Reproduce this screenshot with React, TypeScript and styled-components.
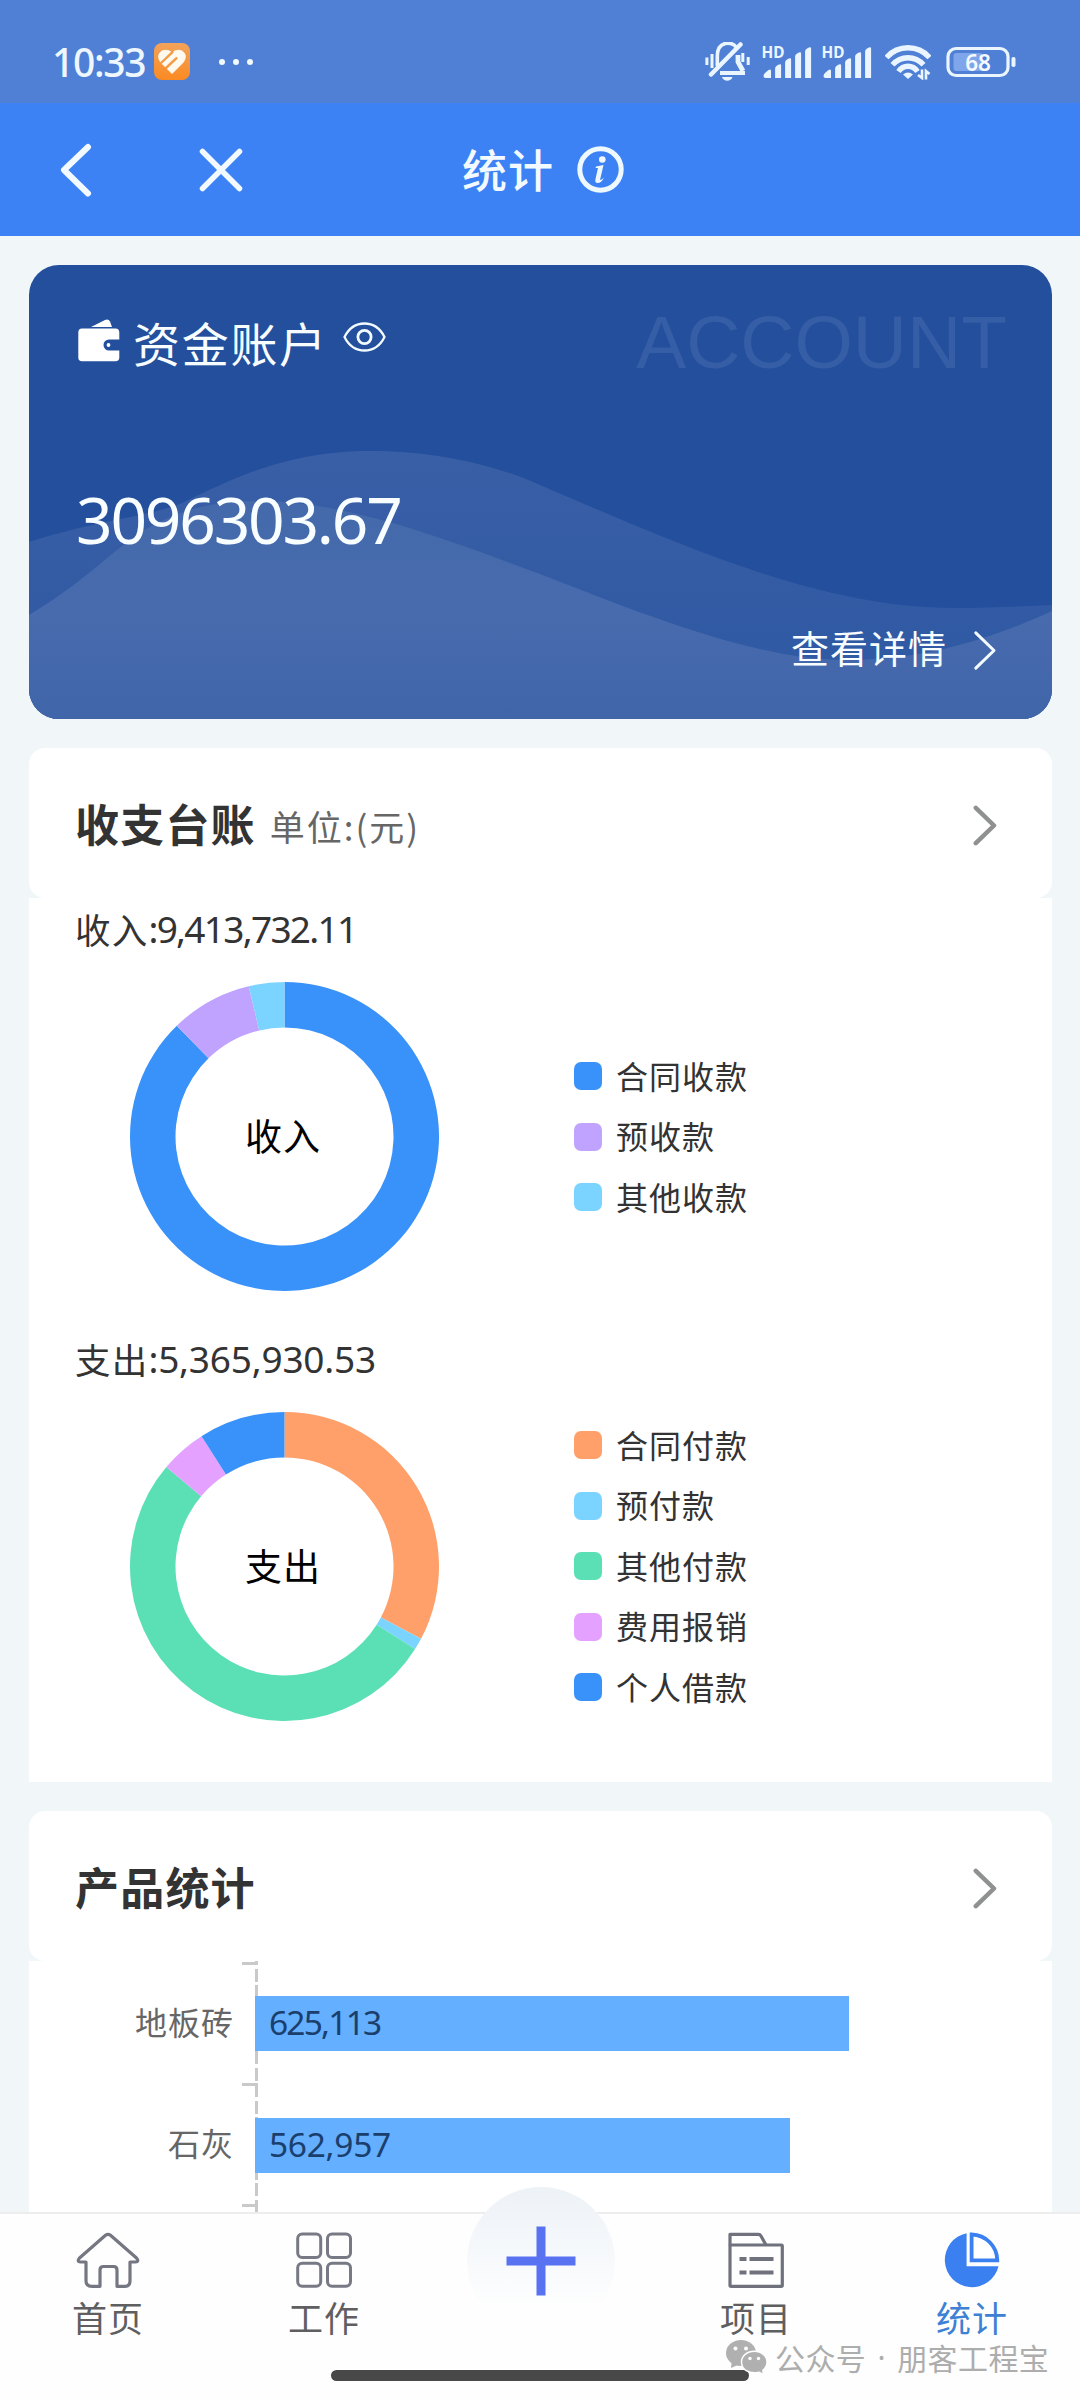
import React from "react";
import styled, { createGlobalStyle } from "styled-components";

const CJK = '"Noto Sans CJK SC", sans-serif';
const MIXED = '"Noto Sans", "Noto Sans CJK SC", sans-serif';

const GlobalStyle = createGlobalStyle`
  * { box-sizing: border-box; }
  body { margin: 0; background: #f1f6f9; }
  svg { display: block; flex: none; }
`;

const Screen = styled.div`
  position: relative;
  width: 1080px;
  height: 2400px;
  overflow: hidden;
  display: flex;
  flex-direction: column;
  background: #f1f6f9;
  font-family: ${CJK};
  color: #333;
`;

/* ---------- status bar ---------- */

const StatusBar = styled.header`
  flex: none;
  display: flex;
  align-items: center;
  height: 103px;
  padding: 20px 64px 0 52px;
  background: #4f80d6;
  color: #eef7ff;
`;

const Clock = styled.span`
  font: 500 39px/40px ${MIXED};
  letter-spacing: -1.3px;
  width: 102px;
`;

const Dots = styled.div`
  display: flex;
  gap: 8px;
  margin-left: 29px;
`;

const Dot = styled.i`
  width: 6px;
  height: 6px;
  border-radius: 50%;
  background: #f2f9ff;
`;

const StatusIcons = styled.div`
  display: flex;
  align-items: center;
  margin-left: auto;
`;

const Spacer = styled.i<{ $w: number }>`
  flex: none;
  width: ${(p) => p.$w}px;
`;

/* ---------- navigation bar ---------- */

const NavBar = styled.nav`
  flex: none;
  display: flex;
  align-items: center;
  height: 133px;
  padding-left: 60px;
  background: #3c82f4;
  color: #f3faff;
`;

const NavTitle = styled.h1`
  margin: -2px 0 0 218px;
  font: 500 45px/60px ${CJK};
  letter-spacing: 1px;
  width: 115px;
`;

/* ---------- content ---------- */

const Content = styled.main`
  flex: 1;
  min-height: 0;
  overflow: hidden;
  display: flex;
  flex-direction: column;
  gap: 29px;
  padding: 29px 28px 0 29px;
`;

const AccountCard = styled.section`
  position: relative;
  flex: none;
  height: 454px;
  padding: 32px 45px 0 47px;
  border-radius: 30px;
  overflow: hidden;
  background: #234f9c;
  color: #f8fdff;
`;

const Waves = styled.svg`
  position: absolute;
  inset: 0;
`;

const AccountHead = styled.div`
  position: relative;
  display: flex;
  align-items: center;
  height: 90px;
  padding-left: 2px;
`;

const AccountTitle = styled.h2`
  margin: 0 0 0 13px;
  font: 400 47px/60px ${CJK};
  letter-spacing: 1.7px;
  width: 210px;
`;

const AccountMark = styled.span`
  margin-left: auto;
  font: 400 75px/90px "Liberation Sans", sans-serif;
  color: #365ea7;
`;

const IconShift = styled.span<{ $up: number }>`
  padding-bottom: ${(p) => p.$up * 2}px;
`;

const Balance = styled.div`
  position: relative;
  margin-top: 93px;
  font: 400 64px/80px ${MIXED};
  letter-spacing: -2.2px;
`;

const DetailLink = styled.div`
  position: relative;
  display: flex;
  align-items: center;
  justify-content: flex-end;
  height: 60px;
  margin-top: 57px;
  padding-right: 10px;
  font: 400 38px/60px ${CJK};
  letter-spacing: 1px;
`;

const DetailArrow = styled.span`
  padding: 7px 0 0 26px;
`;

const Section = styled.section`
  flex: none;
`;

const SectionHead = styled.div`
  display: flex;
  align-items: center;
  height: 150px;
  padding: 0 55px 0 46px;
  border-radius: 16px;
  background: #fff;
`;

const SectionTitle = styled.h2`
  margin: 0;
  font: 700 44px/60px ${CJK};
  letter-spacing: 1.2px;
  color: #333;
`;

const SectionUnit = styled.span`
  margin-left: 14px;
  padding-top: 5px;
  font: 400 35px/60px ${CJK};
  letter-spacing: 2px;
  color: #666;
`;

const HeadArrow = styled.span`
  margin-left: auto;
  padding-top: 5px;
`;

const LedgerBody = styled.div`
  display: flex;
  flex-direction: column;
  gap: 42.5px;
  height: 884px;
  padding: 6px 46px 0;
  background: #fff;
`;

const LedgerTotal = styled.div`
  font: 400 35.5px/50px ${CJK};
  letter-spacing: 1.2px;
  display: flex;
  color: #333;
`;

const Figures = styled.span<{ $track: number }>`
  font: 400 37px/50px ${MIXED};
  letter-spacing: ${(p) => p.$track}px;
`;

const ChartRow = styled.div`
  display: flex;
  align-items: center;
  height: 309px;
  margin-top: 28px;
  padding-left: 55px;
`;

const DonutBox = styled.div`
  display: grid;
  place-items: center;
  width: 309px;
  height: 309px;
  > * { grid-area: 1 / 1; }
`;

const DonutLabel = styled.span`
  padding: 0 3px 3px 0;
  font: 400 37px/50px ${CJK};
  letter-spacing: 1px;
  color: #000;
`;

const Legend = styled.ul`
  margin: 0 0 0 135px;
  padding: 0;
  list-style: none;
`;

const LegendItem = styled.li`
  display: flex;
  align-items: center;
  gap: 14px;
  height: 60.5px;
  font: 400 32px/44px ${CJK};
  letter-spacing: 1px;
  span { margin-top: -3px; }
`;

const Swatch = styled.i<{ $color: string }>`
  width: 28px;
  height: 28px;
  border-radius: 7px;
  background: ${(p) => p.$color};
`;

/* ---------- bar chart ---------- */

const BarBody = styled.div`
  display: grid;
  grid-template-columns: 205px 21px 1fr;
  height: 300px;
  background: #fff;
`;

const Names = styled.div`
  padding-top: 1px;
`;

const Name = styled.div`
  height: 121.2px;
  text-align: right;
  font: 400 32px/119px ${CJK};
  letter-spacing: 1px;
  color: #666;
`;

const Axis = styled.div`
  display: flex;
  flex-direction: column;
  align-items: flex-end;
  width: 24px;
  padding: 1px 0 0;
  background: repeating-linear-gradient(
      to bottom, #c9c9c9 0 13px, transparent 13px 16.5px
    ) right -8.5px / 3px 320px no-repeat;
`;

const Tick = styled.i`
  width: 16px;
  height: 121px;
  border-top: 3px solid #c9c9c9;
`;

const Bars = styled.div`
  position: relative;
  display: flex;
  flex-direction: column;
  gap: 66.5px;
  padding-top: 35px;
`;

const Bar = styled.div<{ $track: number }>`
  height: 55px;
  padding-left: 14px;
  background: #64afff;
  font: 400 33.5px/53px ${MIXED};
  letter-spacing: ${(p) => p.$track}px;
  color: #1b3f6d;
`;

/* ---------- tab bar ---------- */

const TabBar = styled.footer`
  position: relative;
  flex: none;
  display: grid;
  grid-template-columns: repeat(5, 216px);
  height: 188px;
  border-top: 2px solid #ededee;
  background: #fefefe;
`;

const Tab = styled.div<{ $active?: boolean }>`
  display: flex;
  flex-direction: column;
  align-items: center;
  padding-top: 18px;
  font: 400 35px/36px ${CJK};
  letter-spacing: 1px;
  color: ${(p) => (p.$active ? "#3d80d4" : "#5f5f61")};
  svg { margin-bottom: 11px; }
`;

const AddButton = styled.div`
  position: absolute;
  left: 467px;
  top: -27px;
  display: grid;
  place-items: center;
  width: 148px;
  height: 148px;
  border-radius: 50%;
  background: linear-gradient(#edf2f6, #f5f8fb 40%, #fefefe 82%);
`;

const HomeIndicator = styled.div`
  position: absolute;
  left: 331px;
  bottom: 19px;
  width: 418px;
  height: 11px;
  border-radius: 6px;
  background: #484848;
`;

const Watermark = styled.div`
  position: absolute;
  left: 726px;
  bottom: 25px;
  display: flex;
  align-items: center;
  height: 35px;
  font: 400 30px/32px ${CJK};
  letter-spacing: 0.4px;
  color: #adadad;
  svg { margin-right: 8px; }
  span { margin-top: -2px; }
`;

const Separator = styled.b`
  width: 31px;
  text-align: center;
  font: 400 30px/32px "Noto Sans", sans-serif;
`;

/* ---------- drawings ---------- */

const HeartAppIcon = () => (
  <svg width="36" height="37" viewBox="0 0 36 37">
    <defs>
      <linearGradient id="app" x1="0" y1="0" x2="0" y2="1">
        <stop offset="0" stopColor="#f2a35c" />
        <stop offset="1" stopColor="#fb8a22" />
      </linearGradient>
    </defs>
    <rect width="36" height="37" rx="8" fill="url(#app)" />
    <path d="M18 30.500 L7 19.500 C2.500 14 5 7.300 11.500 7.300 C14.500 7.300 16.800 8.600 18 10 C19.500 8.600 21.500 7.300 24.500 7.300 C31 7.300 33.500 14 29 19.500 Z" fill="#fffaf0" stroke="#fffaf0" strokeLinejoin="round" />
    <path d="M6.500 20.500 L18.500 9.200 M12 25 L22.500 15.200" stroke="#f59a45" strokeWidth="2.400" strokeLinecap="round" />
  </svg>
);

const MuteBell = () => (
  <svg width="45" height="40" viewBox="705.500 42 45 40" fill="none" stroke="#eaf5ff" strokeWidth="3.600">
    <path d="M717.800 66 V56 C717.800 40.500 733 41 736.500 47" />
    <path d="M711.500 74.500 L741 44.500" strokeWidth="4.500" strokeLinecap="round" />
    <path d="M738.500 55 V62 L743.500 71" strokeWidth="4.800" />
    <path d="M720.500 73 H745.500" strokeWidth="4" />
    <path d="M722.500 77 H733 C731.500 82 724 82 722.500 77 Z" fill="#eaf5ff" stroke="none" />
    <path d="M707.400 57.500 V65 M712.500 54 V68 M743.300 53 V62 M748.700 57 V65" strokeWidth="3" />
  </svg>
);

const Signal = () => (
  <svg width="51" height="50" viewBox="761.500 36 51 50" fill="#eaf5ff">
    <text x="762" y="57" fontFamily="Noto Sans, sans-serif" fontSize="16.500" fontWeight="700" textLength="23" lengthAdjust="spacingAndGlyphs">HD</text>
    <path d="M764 75 q0 -2 2 -3.500 l3 -2.500 q2.500 -1.500 2.500 1 V77 H766 q-2 0 -2 -2 Z" />
    <path d="M775.600 67.500 q0 -2 2 -3 q4 -2.500 4 0 V77 H775.600 Z" />
    <path d="M785.600 61.500 q0 -2 2 -3 q4 -2.500 4 0 V77 H785.600 Z" />
    <path d="M795.600 55.500 q0 -2 2 -3 q4 -2.500 4 0 V77 H795.600 Z" />
    <path d="M805.600 50.500 q0 -2 2 -3 q4 -2.500 4 0 V77 H805.600 Z" />
  </svg>
);

const Wifi = () => (
  <svg width="46" height="36" viewBox="885 44 46 36" fill="none" stroke="#eaf5ff" strokeWidth="5.400">
    <path d="M886.500 57.500 C898 44.500 918 44.500 929.500 57.500" />
    <path d="M892.500 64.800 C901 55.300 915 55.300 923.500 64.800" />
    <path d="M898.500 71.500 C903.500 64.500 912.500 64.500 917.500 71.500" />
    <path d="M903 74.500 Q908 70.500 913 74.500 L908 79 Z" fill="#eaf5ff" stroke="none" />
    <path d="M922 69.500 V78 L918 75 M926 79.500 V71 L929.500 74" strokeWidth="2.600" />
  </svg>
);

const Battery = () => (
  <svg width="70" height="32" viewBox="945.500 45 70 32">
    <rect x="953" y="52" width="29" height="18" rx="3" fill="#7fa6ea" />
    <rect x="947.500" y="47.500" width="60" height="27" rx="8" fill="none" stroke="#eaf5ff" strokeWidth="3.200" />
    <rect x="1011" y="56" width="4" height="10" rx="1.800" fill="#eaf5ff" />
    <text x="977.500" y="69.700" textAnchor="middle" fontFamily="Noto Sans, sans-serif" fontSize="22.500" fontWeight="600" fill="#f4faff">68</text>
  </svg>
);

const InfoIcon = () => (
  <svg width="47" height="47" viewBox="0 0 47 47">
    <circle cx="23.500" cy="23.500" r="20.700" fill="none" stroke="#eef8ff" strokeWidth="5" />
    <circle cx="25.300" cy="13.500" r="3.300" fill="#eef8ff" />
    <path d="M19 20.500 L26.500 19 L23 34 Q24.500 34 27 31.500 Q24.500 37 20.500 37 Q17.500 37 18.500 33 L21 22 L18.500 22 Z" fill="#eef8ff" />
  </svg>
);

const Wallet = () => (
  <svg width="42" height="43" viewBox="0 0 42 43" fill="#fff">
    <path d="M13 8 L27 0.900 Q30.500 -0.400 32 2.500 L34 8 Z" />
    <path d="M4 9.500 H37.500 Q41.300 9.500 41.300 13.500 V20.500 H31 A5 5 0 0 0 31 31.500 H41.300 V38.500 Q41.300 42.300 37.500 42.300 H4 Q0.300 42.300 0.300 38.500 V13.500 Q0.300 9.500 4 9.500 Z" />
    <circle cx="30.500" cy="26" r="1.900" />
  </svg>
);

const Eye = () => (
  <svg width="43" height="30" viewBox="0 0 43 30" fill="none" stroke="#f3fbff" strokeWidth="2.300">
    <path d="M1.500 15 C6 6 13.500 1.500 21.500 1.500 S37 6 41.500 15 C37 24 29.500 28.500 21.500 28.500 S6 24 1.500 15 Z" />
    <circle cx="21.500" cy="15" r="6.600" strokeWidth="2.800" />
  </svg>
);

const Chevron = ({ color, stroke }: { color: string; stroke: number }) => (
  <svg width="24" height="41" viewBox="0 0 24 41" fill="none" stroke={color} strokeWidth={stroke} strokeLinecap="round" strokeLinejoin="round">
    <path d="M2.800 2.800 L21 20.500 L2.800 38.200" />
  </svg>
);

type Slice = { name: string; color: string; deg: number };

const R = 154.5;
const INNER = 109;

function Donut({ slices }: { slices: Slice[] }) {
  let angle = 0;
  const point = (r: number, deg: number) => {
    const a = ((deg - 90) * Math.PI) / 180;
    return `${R + r * Math.cos(a)} ${R + r * Math.sin(a)}`;
  };
  return (
    <svg width="309" height="309" viewBox="0 0 309 309">
      {slices.map((s) => {
        const from = angle;
        const to = (angle += s.deg);
        const large = s.deg > 180 ? 1 : 0;
        return (
          <path
            key={s.name}
            fill={s.color}
            d={`M${point(R, from)} A${R} ${R} 0 ${large} 1 ${point(R, to)} L${point(INNER, to)} A${INNER} ${INNER} 0 ${large} 0 ${point(INNER, from)} Z`}
          />
        );
      })}
    </svg>
  );
}

const HomeIcon = () => (
  <svg width="64" height="56" viewBox="0 0 64 56" fill="none" stroke="#747782" strokeWidth="3.200" strokeLinejoin="round">
    <path d="M29.500 3.300 Q32 1.300 34.500 3.300 L60.500 26 Q63.500 29.800 59.500 30 H54 V49 Q54 54.300 49 54.300 H41 V38 Q41 34.500 37.500 34.500 H27.500 Q24 34.500 24 38 V54.300 H16 Q10 54.300 10 49 V30 H4.500 Q0.500 29.800 3.500 26 Z" />
  </svg>
);

const GridIcon = () => (
  <svg width="56" height="56" viewBox="0 0 56 56" fill="none" stroke="#777a85" strokeWidth="3">
    <rect x="1.700" y="2" width="23" height="23.500" rx="4.500" />
    <rect x="31.500" y="2" width="23" height="23.500" rx="4.500" />
    <rect x="1.700" y="31.300" width="23" height="23" rx="4.500" />
    <rect x="31.500" y="31.300" width="23" height="23" rx="4.500" />
  </svg>
);

const FolderIcon = () => (
  <svg width="56" height="56" viewBox="0 0 56 56" fill="none" stroke="#6f727d" strokeWidth="3.200" strokeLinejoin="round">
    <rect x="2" y="13" width="52.300" height="41.300" rx="1" />
    <path d="M2 13.500 V2.300 H30.500 Q32 2.300 33 4 L38 13" />
    <path d="M11.500 27 H18.500 M21.500 27 H45.500 M11.500 40.500 H18.500 M21.500 40.500 H45.500" strokeWidth="4" />
  </svg>
);

const PieIcon = () => (
  <svg width="56" height="56" viewBox="0 0 56 56">
    <path d="M22.600 1.300 A27.200 27.200 0 1 0 54.500 34.200 H22.600 Z" fill="#3b80f1" />
    <path d="M27.600 2.500 C42 3 53 14 53.300 28.300 H27.600 Z" fill="#fff" stroke="#3b80f1" strokeWidth="3.800" />
  </svg>
);

const WechatIcon = () => (
  <svg width="41" height="35" viewBox="0 0 41 35">
    <g fill="#b0b0b0">
      <ellipse cx="15" cy="13" rx="15" ry="13" />
      <path d="M6 20 L5 28 L14 24 Z" />
    </g>
    <g stroke="#fefefe" strokeWidth="1.400" fill="#b0b0b0">
      <path d="M28.300 11.300 C35.500 11.300 41 16 41 22 C41 25.500 39.300 28.300 36.800 30.200 L37.600 34.500 L33 32.300 C22.500 34.500 15.500 29 15.500 22 C15.500 16 21 11.300 28.300 11.300 Z" />
    </g>
    <g fill="#fefefe">
      <circle cx="9.500" cy="8.500" r="2" />
      <circle cx="20" cy="8.500" r="2" />
      <circle cx="24" cy="18.500" r="1.700" />
      <circle cx="32.500" cy="18.500" r="1.700" />
    </g>
  </svg>
);

/* ---------- data ---------- */

const income: Slice[] = [
  { name: "合同收款", color: "#3991fa", deg: 315.8 },
  { name: "预收款", color: "#bfa3ff", deg: 30.8 },
  { name: "其他收款", color: "#7bd4ff", deg: 13.4 },
];

const expense: Slice[] = [
  { name: "合同付款", color: "#ffa06b", deg: 117.9 },
  { name: "预付款", color: "#7bd4ff", deg: 4.4 },
  { name: "其他付款", color: "#5bdfb5", deg: 187.8 },
  { name: "费用报销", color: "#e4a1ff", deg: 17.4 },
  { name: "个人借款", color: "#3991fa", deg: 32.5 },
];

const products = [
  { name: "地板砖", value: 625113, track: -1.8 },
  { name: "石灰", value: 562957, track: -0.3 },
];
const PX_PER_UNIT = 594 / 625113;

function Ledger(props: { label: string; total: string; track: number; slices: Slice[] }) {
  return (
    <div>
      <LedgerTotal>
        {props.label}
        <Figures $track={props.track}>:{props.total}</Figures>
      </LedgerTotal>
      <ChartRow>
        <DonutBox>
          <Donut slices={props.slices} />
          <DonutLabel>{props.label}</DonutLabel>
        </DonutBox>
        <Legend>
          {props.slices.map((s) => (
            <LegendItem key={s.name}>
              <Swatch $color={s.color} />
              <span>{s.name}</span>
            </LegendItem>
          ))}
        </Legend>
      </ChartRow>
    </div>
  );
}

export default function App() {
  return (
    <Screen>
      <GlobalStyle />
      <StatusBar>
        <Clock>10:33</Clock>
        <HeartAppIcon />
        <Dots>
          <Dot />
          <Dot />
          <Dot />
        </Dots>
        <StatusIcons>
          <MuteBell />
          <Spacer $w={11} />
          <Signal />
          <Spacer $w={9} />
          <Signal />
          <Spacer $w={13} />
          <Wifi />
          <Spacer $w={15} />
          <Battery />
        </StatusIcons>
      </StatusBar>

      <NavBar>
        <svg width="33" height="54" viewBox="0 0 33 54" fill="none" stroke="currentColor" strokeWidth="6" strokeLinecap="round" strokeLinejoin="round">
          <path d="M28 4 L4 27 L28 50.500" />
        </svg>
        <Spacer $w={105} />
        <svg width="46" height="46" viewBox="0 0 46 46" fill="none" stroke="currentColor" strokeWidth="5.500" strokeLinecap="round">
          <path d="M4.500 4.500 L41.500 41.500 M41.500 4.500 L4.500 41.500" />
        </svg>
        <NavTitle>统计</NavTitle>
        <InfoIcon />
      </NavBar>

      <Content>
        <AccountCard>
          <Waves width="1023" height="454" viewBox="29 265 1023 454">
            <defs>
              <linearGradient id="front" x1="0" y1="0" x2="0" y2="1">
                <stop offset="0" stopColor="#446aab" />
                <stop offset="0.500" stopColor="#486bae" />
                <stop offset="1" stopColor="#4065a9" />
              </linearGradient>
              <linearGradient id="back" x1="0" y1="0" x2="0" y2="1">
                <stop offset="0" stopColor="#395fa6" />
                <stop offset="0.700" stopColor="#315aa4" />
              </linearGradient>
            </defs>
            <path fill="url(#back)" d="M29 542 C90 522 140 518 180 504 C240 475 290 451 372 451 C440 451 500 467 540 485 C680 545 820 608 953 608 C990 608 1030 606 1052 605 V719 H29 Z" />
            <path fill="url(#front)" d="M29 615 C80 585 110 553 140 533 C175 511 210 501 258 501 C350 501 450 541 540 574 C640 613 760 662 850 660 C930 660 1000 635 1052 611 V719 H29 Z" />
          </Waves>
          <AccountHead>
            <IconShift $up={2}>
              <Wallet />
            </IconShift>
            <AccountTitle>资金账户</AccountTitle>
            <IconShift $up={5}>
              <Eye />
            </IconShift>
            <AccountMark>ACCOUNT</AccountMark>
          </AccountHead>
          <Balance>3096303.67</Balance>
          <DetailLink>
            查看详情
            <DetailArrow>
              <Chevron color="#f3fbff" stroke={3} />
            </DetailArrow>
          </DetailLink>
        </AccountCard>

        <Section>
          <SectionHead>
            <SectionTitle>收支台账</SectionTitle>
            <SectionUnit>单位:(元)</SectionUnit>
            <HeadArrow>
              <Chevron color="#8f9090" stroke={4.5} />
            </HeadArrow>
          </SectionHead>
          <LedgerBody>
            <Ledger label="收入" total="9,413,732.11" track={-1.7} slices={income} />
            <Ledger label="支出" total="5,365,930.53" track={-0.2} slices={expense} />
          </LedgerBody>
        </Section>

        <Section>
          <SectionHead>
            <SectionTitle>产品统计</SectionTitle>
            <HeadArrow>
              <Chevron color="#8f9090" stroke={4.5} />
            </HeadArrow>
          </SectionHead>
          <BarBody>
            <Names>
              {products.map((p) => (
                <Name key={p.name}>{p.name}</Name>
              ))}
            </Names>
            <Axis>
              <Tick />
              <Tick />
              <Tick />
            </Axis>
            <Bars>
              {products.map((p) => (
                <Bar key={p.name} $track={p.track} style={{ width: p.value * PX_PER_UNIT }}>
                  {p.value.toLocaleString("en-US")}
                </Bar>
              ))}
            </Bars>
          </BarBody>
        </Section>
      </Content>

      <TabBar>
        <Tab>
          <HomeIcon />
          首页
        </Tab>
        <Tab>
          <GridIcon />
          工作
        </Tab>
        <AddButton>
          <svg width="70" height="70" viewBox="0 0 70 70" stroke="#5872f1" strokeWidth="9">
            <path d="M35 0.500 V69.500 M0.500 35 H69.500" />
          </svg>
        </AddButton>
        <i />
        <Tab>
          <FolderIcon />
          项目
        </Tab>
        <Tab $active>
          <PieIcon />
          统计
        </Tab>
        <HomeIndicator />
        <Watermark>
          <WechatIcon />
          <span>公众号</span>
          <Separator>·</Separator>
          <span>朋客工程宝</span>
        </Watermark>
      </TabBar>
    </Screen>
  );
}
